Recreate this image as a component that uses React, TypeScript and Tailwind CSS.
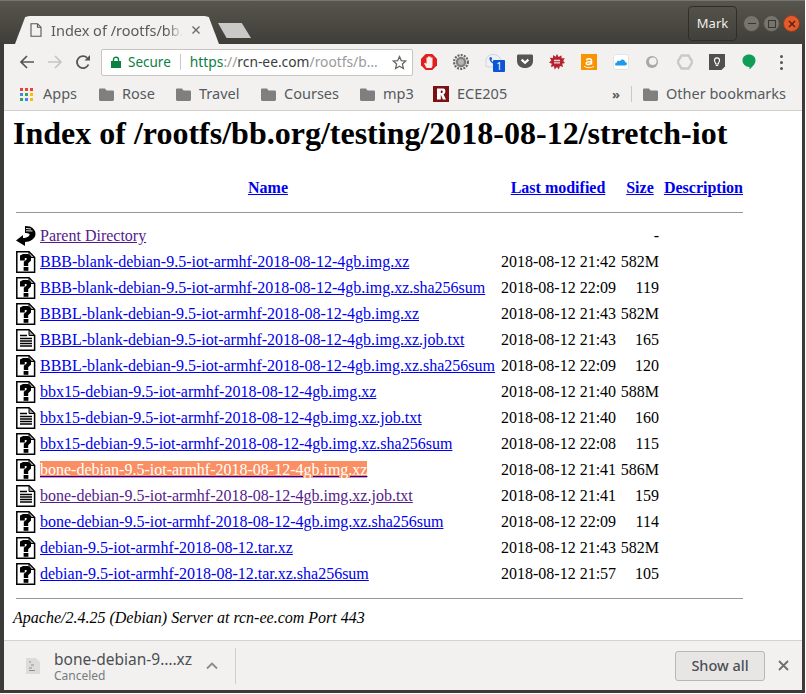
import React from "react";

type Row = { name: string; date: string; size: string; icon: "unknown" | "text"; state?: "visited" | "selected" };

const rows: Row[] = [
  { name: "BBB-blank-debian-9.5-iot-armhf-2018-08-12-4gb.img.xz", date: "2018-08-12 21:42", size: "582M", icon: "unknown" },
  { name: "BBB-blank-debian-9.5-iot-armhf-2018-08-12-4gb.img.xz.sha256sum", date: "2018-08-12 22:09", size: "119", icon: "unknown" },
  { name: "BBBL-blank-debian-9.5-iot-armhf-2018-08-12-4gb.img.xz", date: "2018-08-12 21:43", size: "582M", icon: "unknown" },
  { name: "BBBL-blank-debian-9.5-iot-armhf-2018-08-12-4gb.img.xz.job.txt", date: "2018-08-12 21:43", size: "165", icon: "text" },
  { name: "BBBL-blank-debian-9.5-iot-armhf-2018-08-12-4gb.img.xz.sha256sum", date: "2018-08-12 22:09", size: "120", icon: "unknown" },
  { name: "bbx15-debian-9.5-iot-armhf-2018-08-12-4gb.img.xz", date: "2018-08-12 21:40", size: "588M", icon: "unknown" },
  { name: "bbx15-debian-9.5-iot-armhf-2018-08-12-4gb.img.xz.job.txt", date: "2018-08-12 21:40", size: "160", icon: "text" },
  { name: "bbx15-debian-9.5-iot-armhf-2018-08-12-4gb.img.xz.sha256sum", date: "2018-08-12 22:08", size: "115", icon: "unknown" },
  { name: "bone-debian-9.5-iot-armhf-2018-08-12-4gb.img.xz", date: "2018-08-12 21:41", size: "586M", icon: "unknown", state: "selected" },
  { name: "bone-debian-9.5-iot-armhf-2018-08-12-4gb.img.xz.job.txt", date: "2018-08-12 21:41", size: "159", icon: "text", state: "visited" },
  { name: "bone-debian-9.5-iot-armhf-2018-08-12-4gb.img.xz.sha256sum", date: "2018-08-12 22:09", size: "114", icon: "unknown" },
  { name: "debian-9.5-iot-armhf-2018-08-12.tar.xz", date: "2018-08-12 21:43", size: "582M", icon: "unknown" },
  { name: "debian-9.5-iot-armhf-2018-08-12.tar.xz.sha256sum", date: "2018-08-12 21:57", size: "105", icon: "unknown" },
];

const UnknownIcon = () => (
  <svg width="20" height="22" viewBox="0 0 20 22" className="block">
    <path d="M.8 .8H13L18.6 6.5V21.2H.8Z" fill="#fff" stroke="#000" strokeWidth="1.5" />
    <path d="M13 .8V6.5H18.6Z" fill="#9a9a9a" stroke="#000" strokeWidth="1" />
    <path d="M4 4.5L7 3H12L15 5V9.5L12.2 12.2V15H7.8V10.8L10.6 8.6V7H8.8V9.4H4Z" fill="#000" />
    <rect x="7.6" y="16" width="4.8" height="3.8" fill="#000" />
  </svg>
);

const TextIcon = () => (
  <svg width="20" height="22" viewBox="0 0 20 22" className="block">
    <path d="M.8 .8H13L18.6 6.5V21.2H.8Z" fill="#fff" stroke="#000" strokeWidth="1.5" />
    <path d="M13 .8V6.5H18.6Z" fill="#9a9a9a" stroke="#000" strokeWidth="1" />
    <path d="M4 6.5H11M4 9.5H16M4 12H16M4 14.5H16M4 17H16" stroke="#000" strokeWidth="1.3" />
  </svg>
);

const BackIcon = () => (
  <svg width="20" height="22" viewBox="0 0 20 22" className="block">
    <path d="M9 1L14 1.5C18 3.5 19.5 6 19.5 9C19.5 13.5 14 17 9 17V21L0 15.5L7 10V13C11 13 14 11 13.5 9C12 8 10.5 8 9 8Z" fill="#000" />
    <path d="M10 3.5L15 4M10 5.8L16.5 6" stroke="#fff" strokeWidth="0.9" />
  </svg>
);

const Folder = () => (
  <svg width="15" height="13" viewBox="0 0 15 13" className="block shrink-0">
    <path d="M1 0.5H6L7.5 2.5H13.5C14.2 2.5 15 3 15 3.8V11.5C15 12.3 14.2 13 13.5 13H1.5C0.7 13 0 12.3 0 11.5V1.5C0 1 0.5 0.5 1 0.5Z" fill="#7f7f7f" />
  </svg>
);

const Bookmark = ({ label, w }: { label: string; w: string }) => (
  <div className={`flex items-center gap-[8px] ${w}`}>
    <Folder />
    <span>{label}</span>
  </div>
);

const AppsIcon = () => {
  const colors = ["#ea4335", "#ea4335", "#ea4335", "#4285f4", "#34a853", "#fbbc05", "#34a853", "#4285f4", "#fbbc05"];
  return (
    <div className="grid grid-cols-3 gap-[2px] w-[13px] h-[13px] shrink-0">
      {colors.map((c, i) => (
        <svg key={i} width="3" height="3" className="block">
          <rect width="3" height="3" fill={c} />
        </svg>
      ))}
    </div>
  );
};

const Ext = ({ children }: { children: React.ReactNode }) => (
  <div className="w-[32px] h-[20px] flex items-center justify-center">
    <svg width="16" height="16" viewBox="0 0 16 16" className="block">
      {children}
    </svg>
  </div>
);

const Extensions = () => (
  <div className="flex items-center shrink-0">
    <Ext>
      <path d="M4.7 0H11.3L16 4.7V11.3L11.3 16H4.7L0 11.3V4.7Z" fill="#e1201e" />
      <path d="M5.5 14L3 9.5L4.5 8.8L5.5 10V3.5H7V2.5H9.5V3.5H11.5V12L10.5 14Z" fill="#fbeeee" />
    </Ext>
    <Ext>
      <circle cx="8" cy="8" r="6.9" fill="none" stroke="#666" strokeWidth="2.2" strokeDasharray="2 1.2" />
      <circle cx="8" cy="8" r="5.2" fill="#7e7e7e" />
      <circle cx="8" cy="8" r="3" fill="#b5b5b5" />
    </Ext>
    <div className="relative w-[32px] h-[20px] flex items-center justify-center">
      <svg width="18" height="18" viewBox="0 0 18 18" className="block">
        <path d="M9 1.5C13.5 1.5 16.5 4.2 16.5 7.8C16.5 11.2 13.5 14 9 14H5L1.5 13C2.2 12 2 11 1.8 9.5C1.3 5 4.5 1.5 9 1.5Z" fill="#eef1f5" stroke="#cfd4da" />
        <path d="M5.5 4.5L7.3 4L8.2 6L7.2 7C7.6 8 8.3 8.7 9.3 9.2L10.3 8.2L12.3 9.2L11.8 11C8.5 11.5 5 8 5.5 4.5Z" fill="#1558c0" />
      </svg>
      <span className="absolute left-[16px] top-[8px] w-[12px] h-[12px] bg-[#0b55d6] rounded-[1px] text-white text-[10px] leading-[12px] text-center">
        1
      </span>
    </div>
    <Ext>
      <path d="M0 2C0 1 .6 .5 1.5 .5H14.5C15.4 .5 16 1 16 2V7C16 11.4 12.4 14 8 14C3.6 14 0 11.4 0 7Z" fill="#555" />
      <path d="M4.6 5.6L8 8.8L11.4 5.6" fill="none" stroke="#fff" strokeWidth="2.2" />
    </Ext>
    <Ext>
      <path d="M8 0L9.6 3L12.5 1.2L12.6 4.3L15.8 4.2L14.2 7L16 9L13.2 9.8L14 13L11 12L9.8 15.5L8 13L5.6 15.5L5 12.2L1.8 13L2.8 9.8L0 8.5L2.3 6.6L0.8 3.8L4 4L4 1L6.6 2.8Z" fill="#b5232e" />
      <path d="M5 6.5H11M5 8.8H11" stroke="#f4d9d9" strokeWidth="1.3" />
    </Ext>
    <Ext>
      <rect width="16" height="16" fill="#f79400" />
      <path d="M5.5 6.3C5.8 4.2 10.5 4 10.5 6.5V10.5M10.5 7.6C7 7.6 5.2 8 5.2 9.3C5.2 11 9.2 11 10.5 9" fill="none" stroke="#fff" strokeWidth="1.5" />
      <path d="M3 12.2C6 14.2 10 14.2 13 12.4" fill="none" stroke="#fff" strokeWidth="0.9" />
    </Ext>
    <Ext>
      <rect x="0.5" y="0.5" width="15" height="15" rx="2" fill="#fff" stroke="#e3e3e3" />
      <path d="M3.5 11.5C1.6 11.5 1.6 8.6 3.8 8.4C4.4 6.6 6.4 6.6 7 7.3C8.2 4.6 12 5.4 12 8C14.4 8 14.4 11.5 12.2 11.5Z" fill="#1e9be8" />
    </Ext>
    <Ext>
      <circle cx="7" cy="8" r="6" fill="#a8a8a8" />
      <circle cx="7.8" cy="7.2" r="3.8" fill="#f1f1f1" />
    </Ext>
    <Ext>
      <path d="M4.5 1.5H11.5L15.5 8L11.5 14.5H4.5L0.5 8Z" fill="none" stroke="#c9c9c9" strokeWidth="2.4" />
    </Ext>
    <Ext>
      <path d="M0 0H16V12.5L12.5 16H0Z" fill="#505050" />
      <path d="M5.5 6.5C5.5 3 10.5 3 10.5 6.5C10.5 8 9.5 8.5 9.3 10H6.7C6.5 8.5 5.5 8 5.5 6.5ZM6.8 11.5H9.2" fill="none" stroke="#fff" strokeWidth="1.1" />
    </Ext>
    <Ext>
      <path d="M8 .5C12 .5 14.5 3 14.5 6.5C14.5 10 11.5 12.5 8.5 15.5V13C4.5 13 1.5 10 1.5 6.5C1.5 3 4 .5 8 .5Z" fill="#0f9d58" />
    </Ext>
    <div className="w-[32px] flex flex-col items-center gap-[3px]">
      <i className="block w-[3px] h-[3px] rounded-full bg-[#555]" />
      <i className="block w-[3px] h-[3px] rounded-full bg-[#555]" />
      <i className="block w-[3px] h-[3px] rounded-full bg-[#555]" />
    </div>
  </div>
);

export default function App() {
  return (
    <div className="w-[806px] h-[694px] bg-white overflow-hidden font-['Noto_Sans',sans-serif]">
      <div className="w-[805px] h-[693px] flex flex-col bg-[#3c3b37]">
        {/* Title bar + tabs */}
        <div className="h-[44px] flex items-end shrink-0 border-t border-[#77756f] bg-gradient-to-b from-[#57554d] to-[#3f3e39] pl-[15px] pr-[4px] relative">
          <div className="w-[204px] h-[28px] bg-[#f2f1ef] [clip-path:polygon(0_100%,5%_4%,7%_0,93%_0,95%_4%,100%_100%)] flex items-center pl-[15px] shrink-0">
            <svg width="12" height="14" viewBox="0 0 12 14" className="block shrink-0">
              <path d="M1 .7H7.5L11 4.2V13.3H1Z M7.5 .7V4.2H11" fill="none" stroke="#555" strokeWidth="1.1" />
            </svg>
            <span className="ml-[9px] text-[14.5px] leading-[20px] w-[132px] overflow-hidden whitespace-nowrap [mask-image:linear-gradient(to_right,black_88%,transparent)] text-[#5a5a5a]">
              Index of /rootfs/bb.
            </span>
            <svg width="10" height="10" viewBox="0 0 10 10" className="block ml-[8px]">
              <path d="M1.5 1.5L8.5 8.5M8.5 1.5L1.5 8.5" stroke="#6a6a6a" strokeWidth="1.4" />
            </svg>
          </div>
          <div className="w-[33px] h-[15px] mb-[6px] -ml-[1px] bg-[#c9c9c7] [clip-path:polygon(0_0,72%_0,100%_100%,26%_100%)] shrink-0" />
          <div className="absolute left-[688px] top-[5px] w-[49px] h-[35px] rounded-[4px] border border-[#2f2e2a] text-[#f0efec] text-[13px] flex items-center justify-center">
            Mark
          </div>
          <div className="absolute left-[743px] top-[14px] flex gap-[3px]">
            <div className="w-[17px] h-[17px] rounded-full bg-[#76746c] border border-[#4a4943] flex items-center justify-center">
              <i className="block w-[8px] h-[1.5px] bg-[#37362f]" />
            </div>
            <div className="w-[17px] h-[17px] rounded-full bg-[#76746c] border border-[#4a4943] flex items-center justify-center">
              <i className="block w-[8px] h-[8px] border border-[#37362f]" />
            </div>
            <div className="w-[17px] h-[17px] rounded-full bg-[#e5592b] border border-[#8d3d20] flex items-center justify-center">
              <svg width="8" height="8" viewBox="0 0 8 8" className="block">
                <path d="M1 1L7 7M7 1L1 7" stroke="#4a2010" strokeWidth="1.3" />
              </svg>
            </div>
          </div>
        </div>

        <div className="flex-1 mx-[3px] ml-[4px] mb-[3px] flex flex-col bg-white min-h-0">
          {/* Toolbar */}
          <div className="h-[34px] bg-[#f2f1ef] flex items-center shrink-0 pl-[15px] pt-[2px]">
            <div className="flex items-center w-[82px] gap-[12px] shrink-0">
              <svg width="16" height="16" viewBox="0 0 16 16" className="block shrink-0">
                <path d="M15 8H2M8 2L2 8L8 14" fill="none" stroke="#555" strokeWidth="1.7" />
              </svg>
              <svg width="16" height="16" viewBox="0 0 16 16" className="block shrink-0">
                <path d="M1 8H14M8 2L14 8L8 14" fill="none" stroke="#c4c4c4" strokeWidth="1.7" />
              </svg>
              <svg width="16" height="16" viewBox="0 0 16 16" className="block shrink-0">
                <path d="M13.5 10.5A6 6 0 1 1 12.2 3.8" fill="none" stroke="#555" strokeWidth="1.8" />
                <path d="M9.5 6.5H15V1Z" fill="#555" />
              </svg>
            </div>
            <div className="w-[312px] h-[27px] bg-white border border-[#c6c5c2] rounded-[2px] flex items-center shrink-0 text-[13.5px] whitespace-nowrap">
              <svg width="10" height="12" viewBox="0 0 10 12" className="block ml-[9px] shrink-0">
                <path d="M2.5 5V3.4C2.5 .6 7.5 .6 7.5 3.4V5" fill="none" stroke="#0b8043" strokeWidth="1.4" />
                <rect y="5" width="10" height="7" fill="#0b8043" />
              </svg>
              <span className="ml-[7px] text-[#0b8043]">Secure</span>
              <i className="block w-px h-[16px] bg-[#c8c8c8] ml-[9px] mr-[9px]" />
              <span className="w-[197px] overflow-hidden text-[13.8px] text-[#9a9a9a]">
                <span className="text-[#0b8043]">https</span>://<span className="text-[#3c3c3c]">rcn-ee.com</span>/rootfs/b…
              </span>
              <svg width="15" height="15" viewBox="0 0 24 24" className="block ml-[5px] shrink-0">
                <path d="M12 2.5L14.9 9L22 9.7L16.6 14.4L18.2 21.5L12 17.8L5.8 21.5L7.4 14.4L2 9.7L9.1 9Z" fill="none" stroke="#666" strokeWidth="2" />
              </svg>
            </div>
            <Extensions />
          </div>

          {/* Bookmarks */}
          <div className="h-[33px] bg-[#f2f1ef] border-b border-[#d0cfcc] flex items-center shrink-0 pl-[16px] text-[14.5px] text-[#555a60] whitespace-nowrap">
            <div className="flex items-center gap-[10px] w-[79px]">
              <AppsIcon />
              <span>Apps</span>
            </div>
            <Bookmark label="Rose" w="w-[77px]" />
            <Bookmark label="Travel" w="w-[85px]" />
            <Bookmark label="Courses" w="w-[99px]" />
            <Bookmark label="mp3" w="w-[73px]" />
            <div className="flex items-center gap-[8px] w-[179px]">
              <svg width="16" height="16" viewBox="0 0 16 16" className="block shrink-0">
                <rect width="16" height="16" fill="#7b1113" />
                <path d="M4 2.5H10.5C13 2.5 13 8 10.5 8.2L13 13.5H9.8L7.8 8.6V13.5H4ZM7.8 4.6V7H9C10 7 10 4.6 9 4.6Z" fill="#fff" fillRule="evenodd" />
              </svg>
              <span>ECE205</span>
            </div>
            <span className="w-[19px] text-[13px] font-bold leading-none">»</span>
            <i className="block w-px h-[16px] bg-[#c8c8c8] mr-[11px]" />
            <Bookmark label="Other bookmarks" w="w-[150px]" />
          </div>

          {/* Page */}
          <div className="flex-1 min-h-0 pl-[9px] font-['Liberation_Serif',serif] text-[16px] text-black">
            <h1 className="text-[32px] font-bold leading-[37px] mt-[4px] whitespace-nowrap">
              Index of /rootfs/bb.org/testing/2018-08-12/stretch-iot
            </h1>
            <table className="ml-[3px] mt-[23px] table-fixed w-[727px] whitespace-nowrap">
              <thead>
                <tr className="h-[26px]">
                  <th className="w-[24px]" />
                  <th className="w-[456px] font-bold text-center underline text-[#0000ee]">Name</th>
                  <th className="w-[124px] font-bold text-center underline text-[#0000ee]">Last modified</th>
                  <th className="w-[40px] font-bold text-center underline text-[#0000ee]">Size</th>
                  <th className="font-bold text-right underline text-[#0000ee]">Description</th>
                </tr>
                <tr className="h-[22px]">
                  <th colSpan={5} className="p-0">
                    <hr className="border-0 border-t border-[#999] h-0" />
                  </th>
                </tr>
              </thead>
              <tbody>
                <tr className="h-[26px]">
                  <td>
                    <BackIcon />
                  </td>
                  <td>
                    <a className="underline text-[#551a8b]">Parent Directory</a>
                  </td>
                  <td />
                  <td className="text-right pr-[1px]">-</td>
                  <td />
                </tr>
                {rows.map((r) => (
                  <tr key={r.name} className="h-[26px]">
                    <td>{r.icon === "text" ? <TextIcon /> : <UnknownIcon />}</td>
                    <td>
                      <a
                        className={
                          r.state === "selected"
                            ? "underline decoration-[#0000ee] bg-[#f98f62] text-white"
                            : r.state === "visited"
                              ? "underline text-[#551a8b]"
                              : "underline text-[#0000ee]"
                        }
                      >
                        {r.name}
                      </a>
                    </td>
                    <td className="pl-[5px]">{r.date}</td>
                    <td className="text-right pr-[1px]">{r.size}</td>
                    <td />
                  </tr>
                ))}
              </tbody>
            </table>
            <hr className="border-0 border-t border-[#999] w-[727px] ml-[3px] mt-[11px]" />
            <address className="italic mt-[10px] leading-[18px]">Apache/2.4.25 (Debian) Server at rcn-ee.com Port 443</address>
          </div>

          {/* Downloads */}
          <div className="h-[50px] shrink-0 bg-[#f2f1ef] border-t border-[#d3d2cf] flex items-center relative">
            <svg width="14" height="16" viewBox="0 0 14 16" className="block ml-[22px] mt-[1px] shrink-0">
              <path d="M0 0H10L14 4V16H0Z" fill="#dcdcda" />
              <path d="M3 4H5M5 7H8M3 10H6M3 12.5H9" stroke="#8f8f8f" strokeWidth="1" />
            </svg>
            <div className="ml-[14px] w-[154px] flex flex-col">
              <span className="text-[15.5px] leading-[20px] text-[#4b4f54]">bone-debian-9….xz</span>
              <span className="text-[12px] leading-[13px] text-[#777b80]">Canceled</span>
            </div>
            <svg width="12" height="8" viewBox="0 0 12 8" className="block -ml-[2px] mt-[1px] shrink-0">
              <path d="M1 6.5L6 1.5L11 6.5" fill="none" stroke="#8a8a8a" strokeWidth="1.8" />
            </svg>
            <i className="block w-px h-[36px] bg-[#cfcecb] ml-[17px]" />
            <div className="flex-1" />
            <div className="w-[90px] h-[30px] rounded-[3px] border border-[#b8b7b4] bg-[#e7e6e4] text-[14.5px] font-medium text-[#4b4f54] flex items-center justify-center">
              Show all
            </div>
            <svg width="11" height="11" viewBox="0 0 11 11" className="block ml-[13px] mr-[13px] shrink-0">
              <path d="M1 1L10 10M10 1L1 10" stroke="#6f6f6f" strokeWidth="1.8" />
            </svg>
          </div>
        </div>
      </div>
    </div>
  );
}
